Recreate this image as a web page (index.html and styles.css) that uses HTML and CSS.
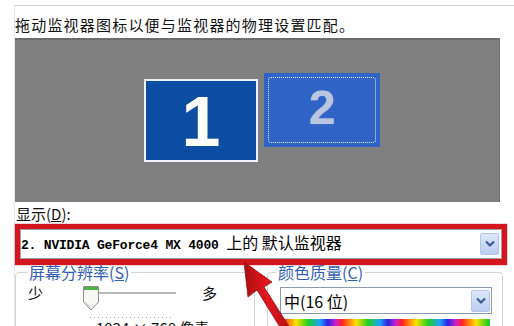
FILE: index.html
```html
<!DOCTYPE html>
<html>
<head>
<meta charset="utf-8">
<link rel="stylesheet" href="styles.css">
</head>
<body>
<div class="screen">
  <div class="frame">
    <p class="title">拖动监视器图标以便与监视器的物理设置匹配。</p>
    <div class="panel">
      <div class="mon mon1"><span class="num">1</span></div>
      <div class="mon mon2"><div class="focus"><span class="num">2</span></div></div>
    </div>
    <div class="disp-label">显示(<u>D</u>):</div>
    <div class="highlight">
      <div class="combo main">
        <span class="combo-text"><span class="mono">2. NVIDIA GeForce4 MX 4000 </span>上的 默认监视器</span>
        <span class="dd"><svg width="12" height="8" viewBox="0 0 12 8"><path d="M2 1.5 L6 5.5 L10 1.5" fill="none" stroke="#3b5c99" stroke-width="2.2"/></svg></span>
      </div>
    </div>
    <div class="groups">
      <fieldset class="group res">
        <legend>屏幕分辨率(<u>S</u>)</legend>
        <div class="slider-row">
          <span class="lbl">少</span>
          <svg class="slider" width="104" height="36" viewBox="0 0 104 36">
            <rect x="6" y="7" width="88" height="2" fill="#b8b8b8"/>
            <rect x="6" y="9" width="88" height="1" fill="#ffffff"/>
            <path d="M1.5 1.5 H16.5 V17 L9 25 L1.5 17 Z" fill="#f7f7f4" stroke="#8a8f8a" stroke-width="1"/>
            <rect x="2" y="2" width="14" height="3" fill="#4fb34a"/>
            <path d="M3 17 L9 23" stroke="#c8c8c8" stroke-width="1"/>
            <line x1="8" y1="32.5" x2="92" y2="32.5" stroke="#9a9a9a" stroke-width="1" stroke-dasharray="1 3"/>
          </svg>
          <span class="lbl more">多</span>
        </div>
        <div class="res-text">1024 × 768 像素</div>
      </fieldset>
      <fieldset class="group color">
        <legend>颜色质量(<u>C</u>)</legend>
        <div class="combo small">
          <span class="combo-text">中(16 位)</span>
          <span class="dd"><svg width="12" height="8" viewBox="0 0 12 8"><path d="M2 1.5 L6 5.5 L10 1.5" fill="none" stroke="#3b5c99" stroke-width="2.2"/></svg></span>
        </div>
        <div class="rainbow"></div>
      </fieldset>
    </div>
  </div>
  <svg class="arrow" width="514" height="326" viewBox="0 0 514 326">
    <defs>
      <linearGradient id="ag" x1="0" y1="0" x2="1" y2="0">
        <stop offset="0" stop-color="#a80d12"/>
        <stop offset="0.5" stop-color="#e3171e"/>
        <stop offset="1" stop-color="#b50f15"/>
      </linearGradient>
    </defs>
    <polygon points="244,262 272,282 264,287 290,328 283,332 257,290 248,297" fill="url(#ag)" stroke="#9c0c10" stroke-width="0.8"/>
  </svg>
</div>
</body>
</html>
```
FILE: styles.css
```css
html, body {
  margin: 0;
  padding: 0;
  background: #ffffff;
}
.screen {
  position: relative;
  width: 514px;
  height: 326px;
  overflow: hidden;
  background: #ffffff;
  font-family: "Noto Sans CJK SC", "Liberation Sans", sans-serif;
  color: #111;
}
.frame {
  margin: 5px 0 0 14px;
  border-top: 1px solid #cfcfcf;
  border-left: 1px solid #e6e6e6;
  height: 320px;
}
.title {
  margin: 0;
  padding: 9px 0 0 0;
  height: 23px;
  font-size: 15px;
  letter-spacing: 1.2px;
  line-height: 20px;
  color: #111;
}
.panel {
  width: 485px;
  background: #808080;
  border-top: 2px solid #6c6c6c;
  border-right: 1px solid #707070;
  display: flex;
  align-items: flex-start;
  gap: 6px;
  padding-left: 129px;
  box-sizing: border-box;
  height: 164px;
  padding-top: 33px;
}
.mon {
  box-sizing: border-box;
  display: flex;
  align-items: center;
  justify-content: center;
}
.mon1 {
  width: 114px;
  height: 83px;
  margin-top: 6px;
  background: #0a4da3;
  border: 2px solid #eef3fb;
}
.mon1 .num {
  color: #ffffff;
  font-family: "Liberation Sans", Arial, sans-serif;
  font-weight: bold;
  font-size: 70px;
  line-height: 1;
  margin-top: 2px;
}
.mon2 {
  width: 116px;
  height: 74px;
  background: #2f64c6;
  padding: 4px;
}
.focus {
  width: 100%;
  height: 100%;
  box-sizing: border-box;
  border: 1px dotted #e8eefc;
  border-radius: 3px;
  display: flex;
  align-items: center;
  justify-content: center;
}
.mon2 .num {
  color: #b9c6e0;
  font-family: "Liberation Sans", Arial, sans-serif;
  font-weight: bold;
  font-size: 48px;
  line-height: 1;
  margin-top: -4px;
  text-shadow: 0 0 1px #7f97c8;
}
.disp-label {
  height: 20px;
  font-size: 15px;
  line-height: 20px;
  margin-top: 2px;
  padding-left: 1px;
  color: #111;
}
.disp-label u, legend u {
  text-decoration: underline;
}
.highlight {
  width: 492px;
  height: 41px;
  box-sizing: border-box;
  border: 5px solid #d3161d;
  border-bottom-width: 6px;
  box-shadow: 0 0 1px #8a1014;
  background: #ffffff;
}
.combo {
  box-sizing: border-box;
  border: 1px solid #8da0bd;
  background: #ffffff;
  display: flex;
  align-items: center;
  justify-content: space-between;
}
.combo.main {
  height: 30px;
  padding: 0 2px 0 0;
  border-color: #9aa3ad;
}
.combo-text {
  font-size: 16px;
  line-height: 20px;
  color: #000;
  white-space: nowrap;
}
.mono {
  font-family: "Liberation Mono", "Courier New", monospace;
  font-size: 13px;
  font-weight: bold;
  letter-spacing: -0.2px;
}
.dd {
  width: 19px;
  height: 22px;
  box-sizing: border-box;
  background: linear-gradient(#dbe6fb, #bccdf1);
  border: 1px solid #b3c4e6;
  border-radius: 2px;
  display: flex;
  align-items: center;
  justify-content: center;
}
.groups {
  display: flex;
  margin-top: -2px;
}
.group {
  margin: 0;
  min-width: 0;
  box-sizing: border-box;
  border: 1px solid #d4d4d4;
  border-radius: 4px;
  height: 80px;
}
.group legend {
  font-size: 16px;
  line-height: 18px;
  color: #2f5fb3;
  padding: 0 2px;
}
.res {
  width: 240px;
  padding: 0 10px 0 12px;
}
.res legend {
  margin-left: -1px;
}
.slider-row {
  display: flex;
  align-items: flex-start;
  margin-top: 4px;
}
.lbl {
  font-size: 15px;
  line-height: 16px;
}
.slider {
  margin-left: 39px;
  margin-top: 0;
}
.more {
  margin-left: 16px;
}
.res-text {
  font-size: 15px;
  line-height: 18px;
  padding-left: 68px;
  margin-top: -2px;
}
.color {
  width: 236px;
  margin-left: 12px;
  padding: 0 10px 0 12px;
}
.color legend {
  margin-left: -4px;
}
.combo.small {
  width: 212px;
  height: 27px;
  margin-top: 6px;
  padding: 0 1px 0 3px;
  border-color: #8c9aad;
}
.rainbow {
  width: 208px;
  height: 12px;
  margin-top: 5px;
  margin-left: 2px;
  background: repeating-linear-gradient(90deg, #ff2020 0px, #ffe000 14px, #20d020 26px, #20a0ff 38px, #3020e0 46px, #d020d0 54px, #ff2020 60px);
}
.arrow {
  position: absolute;
  left: 0;
  top: 0;
  pointer-events: none;
}
```
